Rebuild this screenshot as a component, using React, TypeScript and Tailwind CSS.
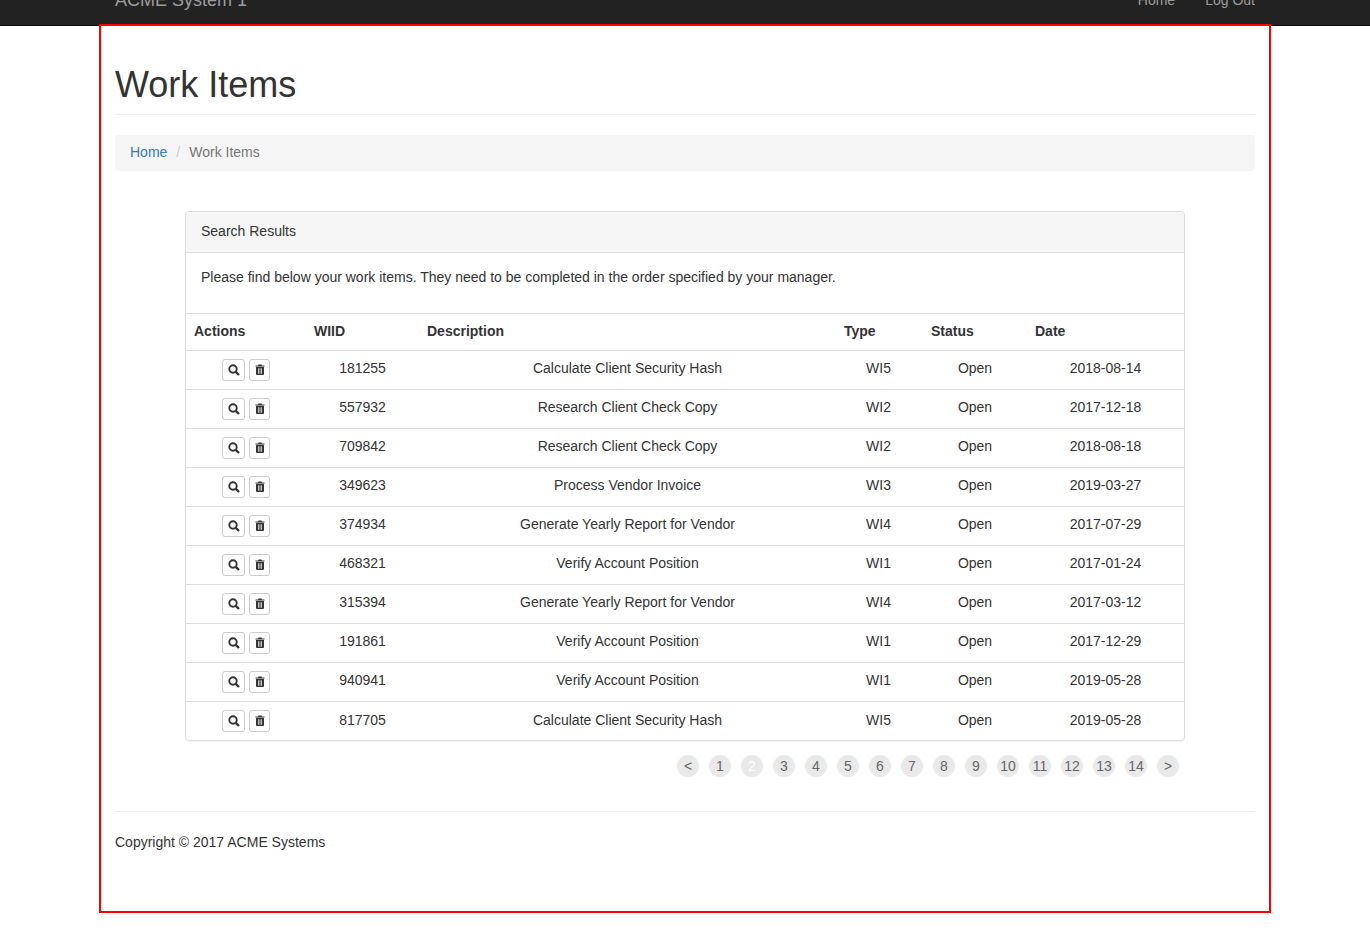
const rows = [
  ["181255", "Calculate Client Security Hash", "WI5", "2018-08-14"],
  ["557932", "Research Client Check Copy", "WI2", "2017-12-18"],
  ["709842", "Research Client Check Copy", "WI2", "2018-08-18"],
  ["349623", "Process Vendor Invoice", "WI3", "2019-03-27"],
  ["374934", "Generate Yearly Report for Vendor", "WI4", "2017-07-29"],
  ["468321", "Verify Account Position", "WI1", "2017-01-24"],
  ["315394", "Generate Yearly Report for Vendor", "WI4", "2017-03-12"],
  ["191861", "Verify Account Position", "WI1", "2017-12-29"],
  ["940941", "Verify Account Position", "WI1", "2019-05-28"],
  ["817705", "Calculate Client Security Hash", "WI5", "2019-05-28"],
];
const pages = ["<", "1", "2", "3", "4", "5", "6", "7", "8", "9", "10", "11", "12", "13", "14", ">"];

function SearchIcon() {
  return (
    <svg width="12" height="12" viewBox="0 0 12 12" fill="none" stroke="#333">
      <circle cx="5" cy="5" r="3.7" strokeWidth="1.9" />
      <path d="M7.8 7.8L11 11" strokeWidth="2.4" />
    </svg>
  );
}

function TrashIcon() {
  return (
    <svg width="10" height="11" viewBox="0 0 10 11" fill="#333" className="mb-[1px]">
      <path d="M3.5 0.5h3l0.5 1h2.5v1h-9v-1h2.5z" />
      <path d="M1 3h8v7a1 1 0 0 1-1 1H2a1 1 0 0 1-1-1z" />
      <path d="M3 4.2h0.7v5.6H3zM4.65 4.2h0.7v5.6h-0.7zM6.3 4.2H7v5.6h-0.7z" fill="#fff" />
    </svg>
  );
}

export default function App() {
  return (
    <div className="min-h-[937px] bg-white text-[14px] leading-[20px] text-[#333] font-['Liberation_Sans',Arial,sans-serif]">
      <nav className="h-[26px] overflow-hidden bg-[#222] border-b border-[#080808]">
        <div className="-mt-[25px] mx-auto w-[1170px] h-[50px] px-[15px] flex items-center justify-between text-[#9d9d9d]">
          <span className="text-[18px]">ACME System 1</span>
          <div className="flex gap-[30px]">
            <span>Home</span>
            <span>Log Out</span>
          </div>
        </div>
      </nav>
      <div className="-mt-[2px] mx-auto w-[1172px] h-[889px] border-2 border-[#ff0000] px-[14px]">
        <div className="mt-[20px] pb-[9px] border-b border-[#eee] mb-[20px] pt-[19px]">
          <h1 className="text-[36px] leading-[40px] font-normal">Work Items</h1>
        </div>
        <div className="h-[36px] bg-[#f5f5f5] rounded px-[15px] pb-[2px] flex items-center">
          <a className="text-[#337ab7]">Home</a>
          <span className="text-[#ccc] px-[9px]">/</span>
          <span className="text-[#777]">Work Items</span>
        </div>
        <div className="mx-[70px] mt-[40px] border border-[#ddd] rounded shadow-[0_1px_1px_rgba(0,0,0,0.05)]">
          <div className="h-[41px] px-[15px] pb-[2px] flex items-center bg-[#f5f5f5] border-b border-[#ddd] rounded-t">Search Results</div>
          <div className="h-[60px] px-[15px] pt-[14px]">Please find below your work items. They need to be completed in the order specified by your manager.</div>
          <table className="w-[998px] table-fixed border-collapse">
            <colgroup>
              <col className="w-[120px]" />
              <col className="w-[113px]" />
              <col className="w-[417px]" />
              <col className="w-[87px]" />
              <col className="w-[104px]" />
              <col className="w-[157px]" />
            </colgroup>
            <thead>
              <tr className="h-[37px] border-t border-b border-[#ddd]">
                {["Actions", "WIID", "Description", "Type", "Status", "Date"].map((h) => (
                  <th key={h} className="px-[8px] pb-[2px] text-left font-bold">{h}</th>
                ))}
              </tr>
            </thead>
            <tbody>
              {rows.map((r, i) => {
                const last = i === 9;
                const td = last ? "px-[8px] align-top text-center pt-[8px]" : "px-[8px] align-top text-center pt-[7px]";
                return (
                  <tr key={r[0]} className={last ? "h-[38px]" : "h-[39px] border-b border-[#ddd]"}>
                    <td className="px-[8px] align-top pt-[8px]">
                      <div className="flex justify-center gap-[4px]">
                        <span className="w-[23px] h-[22px] border border-[#ccc] rounded-[3px] flex items-center justify-center">
                          <SearchIcon />
                        </span>
                        <span className="w-[21px] h-[22px] border border-[#ccc] rounded-[3px] flex items-center justify-center">
                          <TrashIcon />
                        </span>
                      </div>
                    </td>
                    <td className={td}>{r[0]}</td>
                    <td className={td}>{r[1]}</td>
                    <td className={`${td} pr-[10px]`}>{r[2]}</td>
                    <td className={td}>Open</td>
                    <td className={td}>{r[3]}</td>
                  </tr>
                );
              })}
            </tbody>
          </table>
        </div>
        <div className="mx-[70px] mt-[14px] flex justify-end gap-[10px] pr-[6px]">
          {pages.map((p) => (
            <span
              key={p}
              className={`w-[22px] h-[22px] rounded-full bg-[#e9e9e9] flex items-center justify-center ${p === "2" ? "text-white" : "text-[#666]"}`}
            >
              {p}
            </span>
          ))}
        </div>
        <div className="mt-[34px] border-t border-[#eee] pt-[20px]">Copyright © 2017 ACME Systems</div>
      </div>
    </div>
  );
}
